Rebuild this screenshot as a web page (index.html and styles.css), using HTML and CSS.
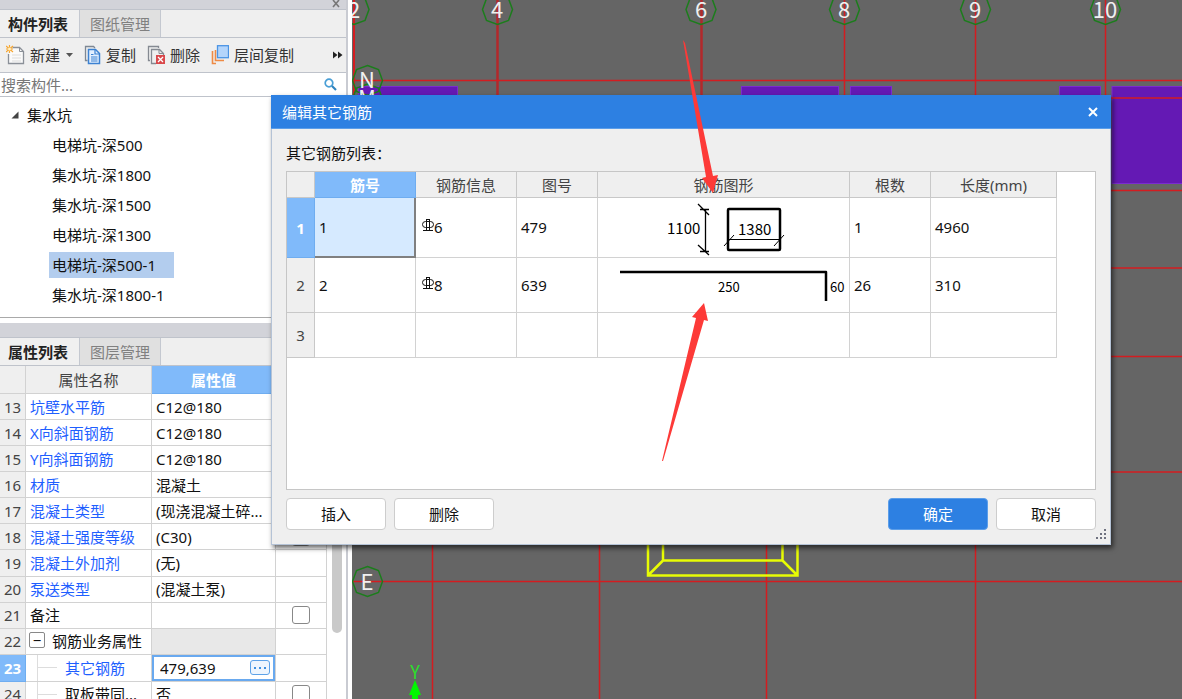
FILE: index.html
```html
<!DOCTYPE html>
<html lang="zh-CN">
<head>
<meta charset="utf-8">
<title>编辑其它钢筋</title>
<link rel="stylesheet" href="styles.css">
</head>
<body>
<div class="app">
  <aside class="side">
    <div class="dock-bar dock-bar-top">
      <button class="dock-close" aria-label="关闭面板"><svg width="8" height="8" viewBox="0 0 8 8"><path d="M1 0L7 7M7 0L1 7" stroke="#777" stroke-width="1.6"/></svg></button>
    </div>
    <div class="tabs">
      <button class="tab tab-active">构件列表</button>
      <button class="tab">图纸管理</button>
    </div>
    <div class="toolbar">
      <button class="tool tool-new">
        <svg width="20" height="20" viewBox="0 0 20 20" fill="none"><path d="M6.500 2.500H13.500L17.500 6.500V18.500H2.500V9" fill="#fafafa" stroke="#8b9098" stroke-width="1.300"/><path d="M13.500 2.500V6.500H17.500" stroke="#8b9098"/><path d="M6 10H15M6 13H15M6 16H15" stroke="#dcdcdc"/><path d="M0 1L7 7M7 1L0 7M3.500 0V8M0 4H7" stroke="#f6a530" stroke-width="1.200"/><circle cx="3.500" cy="4" r="1.500" fill="#fff3c4"/></svg>
        新建
        <svg class="caret" width="7" height="4" viewBox="0 0 7 4"><path d="M0 0H7L3.500 4Z" fill="#555"/></svg>
      </button>
      <button class="tool">
        <svg width="17" height="20" viewBox="0 0 17 20" fill="none"><path d="M3.500 15.500H1.500V1.500H9.500L11 3" stroke="#7d8794" stroke-width="1.300"/><path d="M4.500 4.500H11.500L15.500 8.500V18.500H4.500Z" fill="#e4f0ff" stroke="#3d82d2" stroke-width="1.500"/><path d="M11 4.500V9H15.500M7 9.500H9.500M7 12H13.500M7 14H13.500M7 16H13.500" stroke="#3d82d2" stroke-width="1.200"/></svg>
        复制
      </button>
      <button class="tool">
        <svg width="18" height="20" viewBox="0 0 18 20" fill="none"><path d="M3 15.500H1.500V1.500H11.500V3" stroke="#858a92" stroke-width="1.300"/><path d="M9 18.500H4.500V4.500H12.500L16.500 8.500V10" stroke="#858a92" stroke-width="1.300"/><path d="M12 4.500V8.500H16.500" stroke="#858a92"/><rect x="9" y="10" width="9" height="9" fill="#d9484b"/><path d="M11 12L16 17M16 12L11 17" stroke="#fff" stroke-width="1.300"/></svg>
        删除
      </button>
      <button class="tool">
        <svg width="18" height="20" viewBox="0 0 18 20" fill="none"><path d="M1.500 6V18.500H5" stroke="#ee8a45" stroke-width="1.600"/><path d="M4.500 5V15.500H13" stroke="#ee8a45" stroke-width="1.600"/><rect x="6.500" y="0.700" width="11" height="12" fill="#b4d5fb" stroke="#4b94e4" stroke-width="1.300"/></svg>
        层间复制
      </button>
      <button class="more" aria-label="更多"><svg width="10" height="8" viewBox="0 0 10 8"><path d="M0 0.500L4.500 4L0 7.500ZM5 0.500L9.500 4L5 7.500Z" fill="#222"/></svg></button>
    </div>
    <div class="search">
      <input class="search-input" type="text" placeholder="搜索构件..." aria-label="搜索构件">
      <svg class="search-icon" width="13" height="13" viewBox="0 0 13 13" fill="none"><circle cx="5" cy="5" r="3.800" stroke="#4a9fd6" stroke-width="1.700"/><path d="M8 8L12 12" stroke="#2f83bd" stroke-width="2.200"/></svg>
    </div>
    <div class="tree">
      <div class="tree-root"><svg width="8" height="8" viewBox="0 0 8 8"><path d="M7.500 0.500V7.500H0.500Z" fill="#444"/></svg>集水坑</div>
      <ul class="tree-list">
        <li><span class="node">电梯坑-深500</span></li>
        <li><span class="node">集水坑-深1800</span></li>
        <li><span class="node">集水坑-深1500</span></li>
        <li><span class="node">电梯坑-深1300</span></li>
        <li><span class="node node-selected">电梯坑-深500-1</span></li>
        <li><span class="node">集水坑-深1800-1</span></li>
      </ul>
    </div>
    <div class="dock-bar dock-bar-mid"></div>
    <div class="tabs">
      <button class="tab tab-active">属性列表</button>
      <button class="tab">图层管理</button>
    </div>
    <div class="props">
      <table class="prop-table">
        <colgroup><col class="p-num"><col class="p-name"><col class="p-value"><col class="p-check"></colgroup>
        <thead><tr><th></th><th>属性名称</th><th class="head-selected">属性值</th><th></th></tr></thead>
        <tbody>
          <tr><th>13</th><td class="link">坑壁水平筋</td><td>C12@180</td><td></td></tr>
          <tr><th>14</th><td class="link">X向斜面钢筋</td><td>C12@180</td><td></td></tr>
          <tr><th>15</th><td class="link">Y向斜面钢筋</td><td>C12@180</td><td></td></tr>
          <tr><th>16</th><td class="link">材质</td><td>混凝土</td><td></td></tr>
          <tr><th>17</th><td class="link">混凝土类型</td><td>(现浇混凝土碎...</td><td></td></tr>
          <tr><th>18</th><td class="link">混凝土强度等级</td><td>(C30)</td><td class="check"><input type="checkbox" aria-label="附加 混凝土强度等级"></td></tr>
          <tr><th>19</th><td class="link">混凝土外加剂</td><td>(无)</td><td></td></tr>
          <tr><th>20</th><td class="link">泵送类型</td><td>(混凝土泵)</td><td></td></tr>
          <tr><th>21</th><td>备注</td><td></td><td class="check"><input type="checkbox" aria-label="附加 备注"></td></tr>
          <tr><th>22</th><td class="group"><button class="fold" aria-label="折叠">−</button>钢筋业务属性</td><td class="muted"></td><td></td></tr>
          <tr><th class="head-selected">23</th><td class="link child">其它钢筋</td><td class="editing"><div class="editor"><input type="text" value="479,639" aria-label="其它钢筋"><button class="dots" aria-label="编辑其它钢筋"><svg width="12" height="4" viewBox="0 0 12 4" fill="#3d8fe0"><rect x="0" y="1" width="2" height="2"/><rect x="5" y="1" width="2" height="2"/><rect x="10" y="1" width="2" height="2"/></svg></button></div></td><td></td></tr>
          <tr><th>24</th><td class="child">取板带同...</td><td>否</td><td class="check"><input type="checkbox" aria-label="附加 取板带同"></td></tr>
        </tbody>
      </table>
      <div class="scroll"><div class="thumb"></div></div>
    </div>
  </aside>

  <main class="canvas">
    <svg class="drawing" width="100%" height="100%">
      <g transform="translate(-352 0)">
        <g fill="#6419b4" stroke="#7b2bd0">
          <rect x="358.500" y="86.500" width="99" height="30"/>
          <rect x="741.500" y="86.500" width="97" height="30"/>
          <rect x="850.500" y="86.500" width="41" height="30"/>
          <rect x="1059.500" y="86.500" width="41" height="30"/>
          <rect x="1112" y="86.500" width="900" height="97"/>
        </g>
        <g stroke="#d41c20" stroke-width="1.500">
          <path d="M354 0V300" stroke-width="2"/>
          <path d="M497.500 0V300M701.500 0V300" stroke="#b3282b" stroke-width="2.500"/>
          <path d="M844.500 0V300M975.500 0V2000M1105.500 0V300M432.500 500V2000M599.500 500V2000M766.500 500V2000"/>
          <path d="M352 80.500H3000M1100 98H3000M1100 190.500H3000M1100 268H3000M1100 356.500H3000M1100 472H3000M352 581.500H3000"/>
        </g>
        <g fill="none" stroke="#1c7d1c" stroke-width="1.500">
          <path d="M0 -15L11 -11L15 0L11 11L0 15L-11 11L-15 0L-11 -11Z" transform="translate(354 9.500)"/>
          <path d="M0 -15L11 -11L15 0L11 11L0 15L-11 11L-15 0L-11 -11Z" transform="translate(497.500 9.500)"/>
          <path d="M0 -15L11 -11L15 0L11 11L0 15L-11 11L-15 0L-11 -11Z" transform="translate(701 9.500)"/>
          <path d="M0 -15L11 -11L15 0L11 11L0 15L-11 11L-15 0L-11 -11Z" transform="translate(844.500 9.500)"/>
          <path d="M0 -15L11 -11L15 0L11 11L0 15L-11 11L-15 0L-11 -11Z" transform="translate(975.500 9.500)"/>
          <path d="M0 -15L11 -11L15 0L11 11L0 15L-11 11L-15 0L-11 -11Z" transform="translate(1105.500 9.500)"/>
          <path d="M0 -15L11 -11L15 0L11 11L0 15L-11 11L-15 0L-11 -11Z" transform="translate(367.500 80.500)"/>
          <path d="M0 -15L11 -11L15 0L11 11L0 15L-11 11L-15 0L-11 -11Z" transform="translate(367.500 99)"/>
          <path d="M0 -15L11 -11L15 0L11 11L0 15L-11 11L-15 0L-11 -11Z" transform="translate(367.500 581.500)"/>
        </g>
        <g class="axis-label">
          <text x="354" y="18">2</text><text x="497" y="18">4</text><text x="701" y="18">6</text><text x="844" y="18">8</text><text x="975" y="18">9</text><text x="1105" y="18">10</text>
          <text x="367" y="88">N</text><text x="367" y="106">M</text><text x="367" y="590">E</text>
        </g>
        <path d="M648 500V575.500H797.500V500M663 500V560.500H782.500V500M663 560.500L648 575.500M782.500 560.500L797.500 575.500" fill="none" stroke="#e8fc04" stroke-width="2.500"/>
        <text class="ucs" x="415" y="679">Y</text>
        <path d="M415 680L421 695H418V720H412V695H409Z" fill="#00f800"/>
      </g>
    </svg>
  </main>
</div>

<section class="dialog" role="dialog" aria-label="编辑其它钢筋">
  <header class="titlebar"><span>编辑其它钢筋</span>
    <button class="close" aria-label="关闭"><svg width="10" height="10" viewBox="0 0 10 10"><path d="M1 1L9 9M9 1L1 9" stroke="#fff" stroke-width="2"/></svg></button>
  </header>
  <div class="dialog-body">
    <p class="caption">其它钢筋列表：</p>
    <div class="frame">
      <table class="bar-table">
        <colgroup><col class="b-num"><col class="b-id"><col class="b-info"><col class="b-fig"><col class="b-shape"><col class="b-count"><col class="b-len"></colgroup>
        <thead><tr><th></th><th class="head-selected">筋号</th><th>钢筋信息</th><th>图号</th><th>钢筋图形</th><th>根数</th><th>长度(mm)</th></tr></thead>
        <tbody>
          <tr class="row-a"><th class="head-selected">1</th><td class="cell-active">1</td>
            <td><svg class="grade" width="12" height="12" viewBox="0 0 12 12" fill="none" stroke="#111"><rect x="0.500" y="2.500" width="11" height="6" rx="3"/><path d="M4.500 1V11M7.500 1V11M4 0.500H8M1 11.500H11"/></svg>6</td>
            <td>479</td>
            <td class="shape"><svg width="250" height="58" fill="none" stroke="#000">
              <path d="M107.500 10V52M102 10.500H111M102 52.500H111M100 5L111 16M100 46L111 56" stroke-width="1.300"/>
              <rect x="130" y="10" width="52" height="41" rx="1" stroke-width="2.500"/>
              <path d="M130 40.500H182M126 47L136 36M176 47L186 36"/>
              <text class="dim" x="69" y="35">1100</text><text class="dim" x="140" y="36">1380</text></svg></td>
            <td>1</td><td>4960</td></tr>
          <tr class="row-b"><th>2</th><td>2</td>
            <td><svg class="grade" width="12" height="12" viewBox="0 0 12 12" fill="none" stroke="#111"><rect x="0.500" y="2.500" width="11" height="6" rx="3"/><path d="M4.500 1V11M7.500 1V11M4 0.500H8M1 11.500H11"/></svg>8</td>
            <td>639</td>
            <td class="shape"><svg width="250" height="53" fill="none" stroke="#000">
              <path d="M22 13H228V42" stroke-width="2.500" stroke-linejoin="round"/>
              <text class="dim dim-small" x="120" y="33">250</text><text class="dim dim-small" x="232" y="33">60</text></svg></td>
            <td>26</td><td>310</td></tr>
          <tr class="row-c"><th>3</th><td></td><td></td><td></td><td></td><td></td><td></td></tr>
        </tbody>
      </table>
    </div>
    <footer class="actions">
      <button class="btn">插入</button><button class="btn">删除</button>
      <span class="spacer"></span>
      <button class="btn btn-primary">确定</button><button class="btn">取消</button>
    </footer>
  </div>
  <svg class="grip" width="11" height="11" viewBox="0 0 11 11" fill="#6f7280"><rect x="8" y="0" width="2" height="2"/><rect x="4" y="4" width="2" height="2"/><rect x="8" y="4" width="2" height="2"/><rect x="0" y="8" width="2" height="2"/><rect x="4" y="8" width="2" height="2"/><rect x="8" y="8" width="2" height="2"/></svg>
</section>

<svg class="marks" width="100%" height="100%" fill="#fd3a38" aria-hidden="true">
  <path d="M683 40L685 43L713 176L718 175L713 193L702 178L706 177Z"/>
  <path d="M662 461L696 318L692 317L704 303L708 321L704 320L663 461Z"/>
</svg>
</body>
</html>
```
FILE: styles.css
```css
* { box-sizing: border-box; }
body {
  margin: 0;
  font: 15px/20px "Noto Sans", "Noto Sans CJK SC", sans-serif;
  color: #111;
  overflow: hidden;
}
button, input { font: inherit; color: inherit; margin: 0; padding: 0; border: 0; background: none; }
svg { display: block; flex: none; }
table { border-collapse: separate; border-spacing: 0; table-layout: fixed; }

.app { display: flex; height: 100vh; }

/* left docks */
.side {
  flex: 0 0 348px;
  display: flex;
  flex-direction: column;
  background: #fff;
  border-right: 2px solid #c9cbd2;
  overflow: hidden;
}
.dock-bar { flex: none; display: flex; background: #d2d3d9; border-bottom: 1px solid #bfc3cb; }
.dock-bar-top { height: 10px; justify-content: flex-end; padding-right: 6px; }
.dock-bar-mid { height: 15px; }
.dock-close { height: 8px; }
.tabs { flex: none; display: flex; height: 28px; background: #efefef; border-bottom: 1px solid #bfc3cb; }
.tab { padding: 0 10px; background: #e0e0e0; color: #808080; border-right: 1px solid #c4c8d0; }
.tab-active { padding-left: 8px; padding-right: 11px; background: #f0f0f0; color: #222; font-weight: 600; }
.toolbar { flex: none; display: flex; align-items: center; height: 35px; padding: 0 3px 0 6px; background: #efefef; border-bottom: 1px solid #bfc3cb; color: #333; }
.tool { display: flex; align-items: center; gap: 5px; margin-right: 11px; }
.tool-new { gap: 4px; }
.caret { margin-left: 2px; }
.more { margin-left: auto; }
.search { flex: none; display: flex; align-items: center; height: 24px; padding: 0 9px 0 1px; border-bottom: 1px solid #bfc3cb; }
.search-input { flex: 1; min-width: 0; outline: 0; }
.search-input::placeholder { color: #777; opacity: 1; }
.tree { flex: none; height: 221px; padding-top: 3px; margin-bottom: 5px; border-bottom: 1px solid #a9a9a9; }
.tree-root { display: flex; align-items: center; gap: 8px; height: 30px; padding-left: 11px; }
.tree-list { list-style: none; margin: 0; padding: 0 0 0 49px; }
.tree-list li { display: flex; align-items: center; height: 30px; }
.node { height: 26px; padding: 3px; }
.node-selected { background: #b3cdee; padding-right: 18px; }

.props { display: flex; flex: 1; min-height: 0; overflow: hidden; align-items: flex-start; }
.prop-table { width: 327px; height: 342px; flex: none; }
.p-num { width: 26px; }
.p-name { width: 126px; }
.p-value { width: 124px; }
.p-check { width: 51px; }
.prop-table th, .prop-table td { height: 26px; padding: 0; border-right: 1px solid #d2d2d2; border-bottom: 1px solid #d2d2d2; white-space: nowrap; overflow: hidden; }
.prop-table th { background: #efefef; color: #444; font-weight: 400; text-align: center; }
.prop-table thead th { height: 28px; }
.prop-table td { padding-left: 4px; }
.prop-table .link { color: #1f5fff; }
.prop-table .muted { background: #e8e8e8; }
.prop-table .check { padding: 0; }
.check input { appearance: none; display: block; width: 18px; height: 18px; margin: 0 auto; border: 1px solid #888; border-radius: 3px; background: #fff; }
.fold { display: inline-block; width: 16px; height: 16px; margin: 0 7px 0 0; border: 1px solid #888; border-radius: 2px; line-height: 14px; vertical-align: 1px; }
.prop-table .group { padding-left: 3px; }
.prop-table .child { padding-left: 39px; background: linear-gradient(#ddd, #ddd) 11px 50% / 20px 1px no-repeat, linear-gradient(#ddd, #ddd) 11px 0 / 1px 100% no-repeat; }
.prop-table .editing { padding: 0; }
.editor { display: flex; align-items: center; height: 26px; border: 2px solid #69a9ef; padding: 0 3px 0 6px; }
.editor input { flex: 1; min-width: 0; outline: 0; }
.dots { display: flex; align-items: center; justify-content: center; width: 20px; height: 15px; border: 1px solid #5da2e8; border-radius: 3px; background: #edf5fe; }
.prop-table .head-selected, .bar-table .head-selected { background: #80bafa; color: #fff; font-weight: 700; border-color: #6fadf0; }
.scroll { flex: 1; height: 267px; display: flex; justify-content: center; }
.thumb { width: 10px; border-radius: 5px; background: #c9c9c9; }

/* model view */
.canvas { flex: 1; min-width: 0; margin-left: 4px; background: #656565; overflow: hidden; }
.axis-label { font: 22px "Noto Sans CJK SC", sans-serif; fill: #f0f0f0; text-anchor: middle; }
.ucs { font: 18px "Noto Sans CJK SC", sans-serif; fill: #2be02b; text-anchor: middle; }

/* floating window */
.dialog { position: absolute; left: 271px; right: 71px; top: 95px; background: #efefef; border: 1px solid #b5c3d6; border-top: 0; box-shadow: 2px 3px 5px rgba(0, 0, 0, 0.6); }
.titlebar { display: flex; align-items: center; justify-content: space-between; height: 34px; margin: 0 -1px; padding: 0 13px 0 11px; background: #2d80e2; border-bottom: 1px solid #5c9ee9; color: #fff; }
.dialog-body { padding: 14px; }
.caption { margin: 0 0 8px; }
.frame { height: 319px; background: #fff; border: 1px solid #c6c6c6; overflow: hidden; }
.bar-table { width: 770px; }
.b-num { width: 28px; }
.b-id, .b-info { width: 101px; }
.b-fig, .b-count { width: 81px; }
.b-shape { width: 252px; }
.b-len { width: 126px; }
.bar-table th, .bar-table td { padding: 0 0 1px 4px; border-right: 1px solid #d2d2d2; border-bottom: 1px solid #d2d2d2; text-align: left; }
.bar-table th { padding: 0; background: #efefef; color: #444; font-weight: 400; text-align: center; border-color: #c8c8c8; }
.bar-table thead th { height: 26px; }
.row-a { height: 60px; }
.row-b { height: 55px; }
.row-c { height: 45px; }
.bar-table .shape { padding: 0; }
.bar-table .cell-active { background: #d6eaff; border-right: 2px solid #808080; border-bottom: 2px solid #808080; }
.grade { display: inline-block; margin: 0 0 0 2px; vertical-align: 2px; }
.dim { font: 15px "Noto Sans CJK SC", sans-serif; fill: #000; stroke: none; }
.dim-small { font-size: 13px; }
.actions { display: flex; gap: 8px; margin-top: 8px; }
.spacer { flex: 1; }
.btn { width: 100px; height: 32px; background: #fff; border: 1px solid #cdcdcd; border-radius: 4px; }
.btn-primary { background: #2d80e2; border-color: #5c9ee9; color: #fff; }
.grip { position: absolute; right: 3px; bottom: 4px; }

/* annotation arrows above everything */
.marks { position: absolute; inset: 0; pointer-events: none; }
```
